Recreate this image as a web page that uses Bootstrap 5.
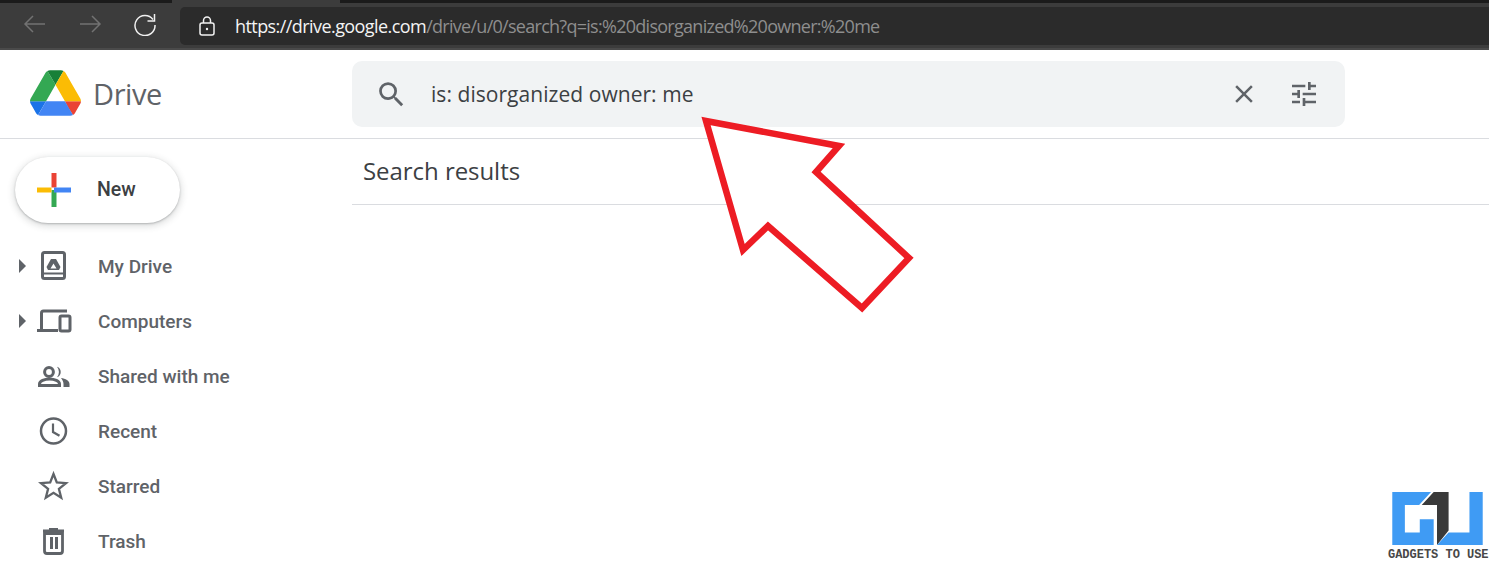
<!doctype html>
<html lang="en"><head><meta charset="utf-8"><title>Drive</title>
<link href="https://cdn.jsdelivr.net/npm/bootstrap@5.3.0/dist/css/bootstrap.min.css" rel="stylesheet">
<style>
html,body{height:581px;overflow:hidden;background:#fff}
body{position:relative;font-family:Roboto,sans-serif}
.chrome-bar{height:50px;background:#3c3c3c;border-bottom:2px solid #4a4a4a}
.strip{height:3px;flex:none}
.strip-a{width:172px;background:#1b1b1b}
.strip-b{width:168px;background:#3c3c3c}
.strip-c{background:#1b1b1b}
.nav-ico{width:55px;flex:none}
.nav-slot{width:180px;flex:none;padding-left:7px}
.url-box{background:#2b2b2b;height:38px;margin-top:4px;border-radius:5px 0 0 5px;padding-left:19px;font:18px "Open Sans","Liberation Sans",sans-serif;color:#8e8e8e;letter-spacing:-.72px;white-space:nowrap}
.url-box b{font-weight:400;color:#f4f4f4;letter-spacing:-.57px}
.url-lock{margin-right:20px}
.dr-head{height:89px;border-bottom:1px solid #dadce0}
.brand{width:352px;flex:none;padding-left:30px;gap:12px}
.brand svg{margin-bottom:2px}
.brand-name{font:29px "Open Sans","Liberation Sans",sans-serif;color:#5f6368;letter-spacing:-.4px;padding-bottom:2px}
.searchbox{width:993px;height:66px;background:#f1f3f4;border-radius:10px;padding-left:23px;padding-right:25px;color:#3c4043}
.q{font:21px "Open Sans","Liberation Sans",sans-serif;margin-left:23px;letter-spacing:.05px;color:#3c4043}
.x-ico{margin-right:29px}
.side{width:352px;flex:none}
.new-btn{width:165px;height:66px;margin:18px 0 0 15px;border-radius:33px;background:#fff;box-shadow:0 1px 2px rgba(60,64,67,.3),0 2px 6px 2px rgba(60,64,67,.15);padding-left:22px;gap:26px;font:500 19.5px Roboto,sans-serif;color:#3c4043}
.new-btn span{padding-bottom:2px}
.menu{margin-top:16px;list-style:none;padding:0}
.menu li{height:55px;display:flex;align-items:center;color:#5f6368;font:500 19px Roboto,sans-serif;position:relative;padding-left:98px}
.caret{position:absolute;left:19px;top:20px;width:0;height:0;border-left:7px solid #5f6368;border-top:7px solid transparent;border-bottom:7px solid transparent}
.m-ico{position:absolute;left:36px;top:10px}
.results{flex:1}
.res-title{height:66px;border-bottom:1px solid #dadce0;padding:0 0 2px 11px;font:24px "Open Sans","Liberation Sans",sans-serif;color:#3c4043;letter-spacing:-.05px}
.arrow{position:absolute;left:680px;top:100px}
.wm{position:absolute;left:1388px;top:492px;width:101px}
.wm-svg{margin-left:4px}
.wm-txt{font:700 12px "Liberation Mono","DejaVu Sans Mono",monospace;color:#484848;line-height:12px;margin-top:4px;white-space:nowrap;letter-spacing:-.02px}
</style></head><body>
<div class="chrome-bar d-flex flex-column">
 <div class="d-flex"><div class="strip strip-a"></div><div class="strip strip-b"></div><div class="strip strip-c flex-grow-1"></div></div>
 <div class="d-flex">
 <div class="nav-slot d-flex align-items-center">
  <svg class="nav-ico" viewBox="0 0 55 24" height="24"><path d="M38 12H18M26 4l-8 8 8 8" fill="none" stroke="#727272" stroke-width="1.5"/></svg>
  <svg class="nav-ico" viewBox="0 0 55 24" height="24"><path d="M18 12h20M30 4l8 8-8 8" fill="none" stroke="#727272" stroke-width="1.5"/></svg>
  <svg class="nav-ico" viewBox="0 0 55 24" height="24"><path d="M36 7.500A10 10 0 1 0 38 13" fill="none" stroke="#f0f0f0" stroke-width="1.5"/><path d="M37.500 2v7h-7" fill="none" stroke="#f0f0f0" stroke-width="1.500"/></svg>
 </div>
 <div class="url-box flex-grow-1 d-flex align-items-center">
  <svg class="url-lock" width="16" height="20" viewBox="0 0 16 20"><rect x="1" y="7" width="14" height="12" rx="2" fill="none" stroke="#f2f2f2" stroke-width="1.500"/><path d="M4.500 7V4.500a3.500 3.500 0 0 1 7 0V7" fill="none" stroke="#f2f2f2" stroke-width="1.500"/><circle cx="8" cy="13" r="1.200" fill="#f2f2f2"/></svg>
  <span><b>https://drive.google.com</b>/drive/u/0/search?q=is:%20disorganized%20owner:%20me</span>
 </div>
 </div>
</div>
<header class="dr-head d-flex align-items-center">
 <div class="brand d-flex align-items-center">
  <svg width="51" height="46" viewBox="0 0 87.300 78"><path d="m6.600 66.850 3.850 6.650c.8 1.400 1.950 2.500 3.300 3.300l13.750-23.800H0c0 1.550.4 3.100 1.200 4.500z" fill="#1a73e8"/><path d="M43.650 25 29.900 1.200c-1.350.8-2.500 1.900-3.300 3.300L1.200 48.500A9.060 9.060 0 0 0 0 53h27.500z" fill="#34a853"/><path d="M73.550 76.800c1.350-.8 2.500-1.900 3.300-3.300l1.600-2.750 7.650-13.250c.8-1.400 1.200-2.950 1.200-4.500H59.800l5.850 11.500z" fill="#ea4335"/><path d="M43.650 25 57.400 1.200C56.050.4 54.500 0 52.900 0H34.400c-1.600 0-3.150.45-4.500 1.200z" fill="#188038"/><path d="M59.800 53H27.500L13.750 76.800c1.350.8 2.900 1.200 4.500 1.200h50.800c1.600 0 3.150-.45 4.500-1.200z" fill="#4285f4"/><path d="M73.400 26.500 60.700 4.500c-.8-1.400-1.950-2.500-3.300-3.300L43.650 25 59.800 53h27.450c0-1.550-.4-3.100-1.200-4.500z" fill="#fbbc04"/></svg>
  <span class="brand-name">Drive</span>
 </div>
 <div class="searchbox d-flex align-items-center">
  <svg width="33" height="33" viewBox="0 0 24 24" fill="#5f6368"><path d="M15.500 14h-.79l-.28-.27A6.470 6.470 0 0 0 16 9.500 6.500 6.500 0 1 0 9.500 16c1.610 0 3.090-.59 4.230-1.570l.27.28v.79l5 4.990L20.490 19zm-6 0C7.010 14 5 11.990 5 9.500S7.010 5 9.500 5 14 7.010 14 9.500 11.990 14 9.500 14z"/></svg>
  <span class="q flex-grow-1">is: disorganized owner: me</span>
  <svg class="x-ico" width="30" height="30" viewBox="0 0 24 24" fill="#5f6368"><path d="M19 6.410 17.590 5 12 10.590 6.410 5 5 6.410 10.590 12 5 17.590 6.410 19 12 13.410 17.590 19 19 17.590 13.410 12z"/></svg>
  <svg width="32" height="32" viewBox="0 0 24 24" fill="#5f6368"><path d="M3 17v2h6v-2zM3 5v2h10V5zm10 16v-2h8v-2h-8v-2h-2v6zM7 9v2H3v2h4v2h2V9zm14 4v-2H11v2zm-6-4h2V7h4V5h-4V3h-2z"/></svg>
 </div>
</header>
<div class="d-flex">
 <aside class="side">
  <button class="new-btn btn d-flex align-items-center border-0">
   <svg width="34" height="34" viewBox="0 0 34 34"><path d="M14.500 0h5v14.500h-5z" fill="#ea4335"/><path d="M14.500 17h5v17h-5z" fill="#34a853"/><path d="M0 14.500h14.500v5H0z" fill="#fbbc04"/><path d="M17 14.500h17v5H17z" fill="#4285f4"/></svg>
   <span>New</span>
  </button>
  <ul class="menu">
   <li><span class="caret"></span><svg class="m-ico" width="36" height="34" viewBox="0 0 36 34"><rect x="6.500" y="3.500" width="22" height="26" rx="2" fill="none" stroke="#5f6368" stroke-width="3"/><path d="M6.500 24.500h22" stroke="#5f6368" stroke-width="2"/><path fill-rule="evenodd" d="M15 10h5l4.500 8-1.500 3H12l-1.500-3zM17.500 14.500l-3 5h6z" fill="#5f6368"/></svg>My Drive</li>
   <li><span class="caret"></span><svg class="m-ico" width="36" height="34" viewBox="0 0 36 34"><path d="M31 7H7.500a2 2 0 0 0-2 2v16" fill="none" stroke="#5f6368" stroke-width="3"/><path d="M1 25h21v3H1z" fill="#5f6368"/><rect x="24" y="12" width="10" height="15" rx="1.500" fill="none" stroke="#5f6368" stroke-width="3"/></svg>Computers</li>
   <li><svg class="m-ico" width="36" height="34" viewBox="0 0 36 34"><circle cx="13" cy="13" r="4.400" fill="none" stroke="#5f6368" stroke-width="3"/><path d="M3.500 26.500V25c0-3 5-5 10-5s10 2 10 5v1.500z" fill="none" stroke="#5f6368" stroke-width="3"/><path d="M21 7.800a5.500 5.500 0 0 1 0 10.400 8 8 0 0 0 0-10.400zM25 19c4.500.5 8.500 2.500 8.500 6v3h-6v-3c0-2-1-4-2.500-6z" fill="#5f6368"/></svg>Shared with me</li>
   <li><svg class="m-ico" width="36" height="34" viewBox="0 0 36 34"><circle cx="17.500" cy="17" r="12.500" fill="none" stroke="#5f6368" stroke-width="2.500"/><path d="M17 9.500V18l6.500 3.800" fill="none" stroke="#5f6368" stroke-width="2.200"/></svg>Recent</li>
   <li><svg class="m-ico" width="36" height="34" viewBox="0 0 36 34"><path d="M17.500 5l3.300 8.500 9.200.6-7.100 5.800 2.300 8.900-7.700-5-7.700 5 2.300-8.900L5 14.100l9.200-.6z" fill="none" stroke="#5f6368" stroke-width="2.300"/></svg>Starred</li>
   <li><svg class="m-ico" width="36" height="34" viewBox="0 0 36 34"><path d="M8.500 9.500h18V27a2.500 2.500 0 0 1-2.500 2.500H11A2.500 2.500 0 0 1 8.500 27z" fill="none" stroke="#5f6368" stroke-width="2.800"/><path d="M7 5.500h21v2.800H7zM13 4h9v2h-9zM14 13h3v12h-3zM19 13h3v12h-3z" fill="#5f6368"/></svg>Trash</li>
  </ul>
 </aside>
 <main class="results"><div class="res-title d-flex align-items-center">Search results</div></main>
</div>
<svg class="arrow" width="250" height="230" viewBox="0 0 250 230"><path d="M26 21 159 46 136 72 229 158 182 208 88 126 63 150z" fill="#fff" stroke="#ed1c24" stroke-width="6.500"/></svg>
<div class="wm">
 <svg class="wm-svg d-block" width="91" height="53" viewBox="97 6 273 160"><path d="M97 6H214L178 45H135V128H180V88H222V166H97z" fill="#3f9bf4"/><path d="M222 6H267V122L232 166V45H186z" fill="#3a3a3a"/><path d="M330 6H370V166H232L267 128H330z" fill="#3f9bf4"/></svg>
 <div class="wm-txt">GADGETS TO USE</div>
</div>
</body></html>
